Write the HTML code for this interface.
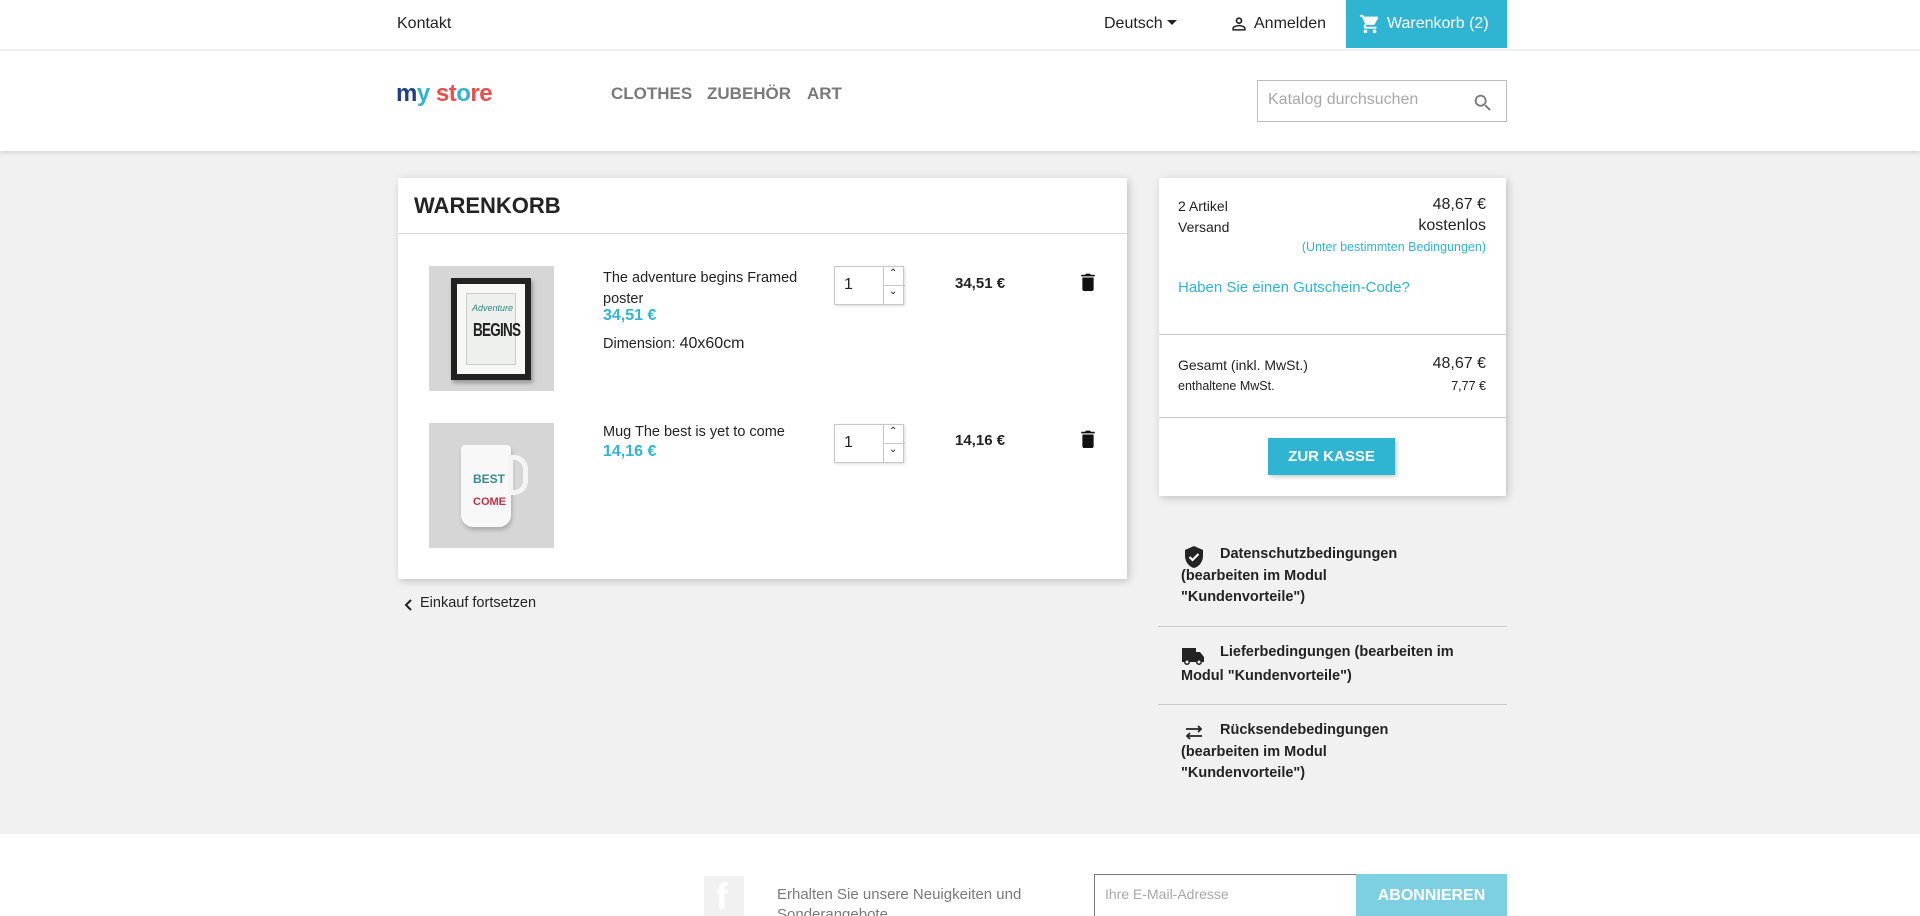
<!DOCTYPE html>
<html><head><meta charset="utf-8"><style>
*{box-sizing:border-box;margin:0;padding:0}
html,body{width:1920px;height:916px;overflow:hidden}
body{background:#f1f1f1;font-family:"Liberation Sans",sans-serif;color:#232323;position:relative}
.a{position:absolute;white-space:nowrap}
.top{position:absolute;left:0;top:0;width:1920px;height:151px;background:#fff;box-shadow:0 2px 4px rgba(0,0,0,.12)}
.topline{position:absolute;left:0;top:49px;width:1920px;height:2px;background:#f1f1f1}
.card{position:absolute;background:#fff;box-shadow:2px 2px 8px rgba(0,0,0,.2)}
.blue{color:#2fb5d2}
.qty{position:absolute;width:70px;height:39px;border:1px solid #c8c8c8;background:#fff;box-shadow:1px 1px 3px rgba(0,0,0,.15)}
.qty .n{position:absolute;left:9px;top:9px;font-size:16px}
.qty .s{position:absolute;left:48px;top:0;width:21px;height:37px;border-left:1px solid #c8c8c8}
.qty .s:after{content:"";position:absolute;left:0;top:18px;width:21px;height:1px;background:#c8c8c8}
.b{font-weight:bold}
.hr{position:absolute;height:1px;background:#c8c8c8}
</style></head><body>
<div class="top"></div>
<div class="topline"></div>
<div class="a" style="left:397px;top:15px;font-size:16px">Kontakt</div>
<div class="a" style="left:1104px;top:15px;font-size:16px">Deutsch <span style="display:inline-block;border:5px solid transparent;border-top-color:#232323;vertical-align:-2px"></span></div>
<svg class="a" style="left:1229px;top:14px" width="20" height="20" viewBox="0 0 24 24"><path fill="#232323" d="M12 4a4 4 0 1 1 0 8 4 4 0 0 1 0-8zm0 2a2 2 0 1 0 0 4 2 2 0 0 0 0-4zm0 7c2.7 0 8 1.3 8 4v3H4v-3c0-2.7 5.3-4 8-4zm0 1.9c-3 0-6.1 1.5-6.1 2.1v1.1h12.2V17c0-.6-3.1-2.1-6.1-2.1z"/></svg>
<div class="a" style="left:1254px;top:15px;font-size:16px">Anmelden</div>
<div class="a" style="left:1346px;top:0;width:161px;height:48px;background:#2fb5d2"></div>
<svg class="a" style="left:1359px;top:13px" width="22" height="22" viewBox="0 0 24 24"><path fill="#fff" d="M7 18a2 2 0 1 0 0 4 2 2 0 0 0 0-4zM1 2v2h2l3.6 7.6-1.4 2.4c-.1.3-.2.6-.2 1 0 1.1.9 2 2 2h12v-2H7.4a.25.25 0 0 1-.2-.4l.9-1.6h7.5c.8 0 1.4-.4 1.7-1l3.6-6.5A1 1 0 0 0 20 4H5.2l-.9-2H1zm16 16a2 2 0 1 0 0 4 2 2 0 0 0 0-4z"/></svg>
<div class="a" style="left:1387px;top:15px;font-size:16px;color:#fff">Warenkorb (2)</div>

<div class="a" style="left:396px;top:80px;font-size:24px;font-weight:bold;letter-spacing:-0.5px"><span style="color:#1e3e8c">m</span><span style="color:#2fb5d2">y</span> <span style="color:#ee4d4d">st</span><span style="color:#2fb5d2">o</span><span style="color:#ee4d4d">re</span></div>
<div class="a b" style="left:611px;top:84px;font-size:17px;color:#7a7a7a">CLOTHES</div>
<div class="a b" style="left:707px;top:84px;font-size:17px;color:#7a7a7a">ZUBEHÖR</div>
<div class="a b" style="left:807px;top:84px;font-size:17px;color:#7a7a7a">ART</div>
<div class="a" style="left:1257px;top:80px;width:250px;height:42px;border:1px solid #bdbdbd;background:#fff"></div>
<div class="a" style="left:1268px;top:91px;font-size:16px;color:#a8a8a8">Katalog durchsuchen</div>
<svg class="a" style="left:1472px;top:92px" width="22" height="22" viewBox="0 0 24 24"><path fill="#7a7a7a" d="M15.5 14h-.8l-.3-.3A6.5 6.5 0 1 0 9.5 16c1.6 0 3.1-.6 4.2-1.6l.3.3v.8l5 5 1.5-1.5-5-5zm-6 0a4.5 4.5 0 1 1 0-9 4.5 4.5 0 0 1 0 9z"/></svg>

<div class="card" style="left:398px;top:178px;width:729px;height:401px"></div>
<div class="a b" style="left:414px;top:193px;font-size:22px">WARENKORB</div>
<div class="hr" style="left:398px;top:233px;width:729px;background:#d6d6d6"></div>

<div class="a" style="left:429px;top:266px;width:125px;height:125px;background:#d6d6d6"></div>
<div class="a" style="left:451px;top:278px;width:80px;height:102px;background:#222;box-shadow:2px 3px 4px rgba(0,0,0,.3)"></div>
<div class="a" style="left:457px;top:284px;width:68px;height:90px;background:#f7f7f5"></div>
<div class="a" style="left:466px;top:293px;width:50px;height:72px;background:#eef0ee;border:1px solid #ccc"></div>
<div class="a" style="left:472px;top:303px;font-size:9px;color:#2a8a7a;font-style:italic">Adventure</div>
<div class="a b" style="left:473px;top:320px;font-size:18px;color:#222;letter-spacing:-1px;transform:scaleX(.75);transform-origin:left">BEGINS</div>

<div class="a" style="left:603px;top:268px;font-size:14.5px;line-height:21px">The adventure begins Framed<br>poster</div>
<div class="a b blue" style="left:603px;top:307px;font-size:16px">34,51 €</div>
<div class="a" style="left:603px;top:335px;font-size:14.5px">Dimension: <span style="font-size:16px">40x60cm</span></div>
<div class="qty" style="left:834px;top:266px"><div class="n">1</div><div class="s"></div><div class="a" style="left:54px;top:1px;font-size:10px">&#8963;</div><div class="a" style="left:54px;top:19px;font-size:10px">&#8964;</div></div>
<div class="a b" style="left:955px;top:275px;font-size:15px">34,51 €</div>
<svg class="a" style="left:1080px;top:273px" width="16" height="18" viewBox="0 0 14 16"><path fill="#111" d="M1 3h12V1.5H9.5L8.7.5H5.3l-.8 1H1zM2 4h10v10.5c0 .8-.7 1.5-1.5 1.5h-7C2.7 16 2 15.3 2 14.5z"/></svg>

<div class="a" style="left:429px;top:423px;width:125px;height:125px;background:#d6d6d6"></div>
<div class="a" style="left:461px;top:445px;width:50px;height:82px;background:#f8f8f8;border-radius:4px 4px 12px 12px;box-shadow:1px 3px 4px rgba(0,0,0,.2)"></div>
<div class="a" style="left:508px;top:455px;width:20px;height:40px;border:5px solid #f4f4f4;border-radius:0 14px 14px 0"></div>
<div class="a b" style="left:473px;top:472px;font-size:12px;color:#3a8a8e">BEST</div>
<div class="a b" style="left:473px;top:496px;font-size:11px;color:#c0304a">COME</div>

<div class="a" style="left:603px;top:424px;font-size:14.5px">Mug The best is yet to come</div>
<div class="a b blue" style="left:603px;top:443px;font-size:16px">14,16 €</div>
<div class="qty" style="left:834px;top:424px"><div class="n">1</div><div class="s"></div><div class="a" style="left:54px;top:1px;font-size:10px">&#8963;</div><div class="a" style="left:54px;top:19px;font-size:10px">&#8964;</div></div>
<div class="a b" style="left:955px;top:432px;font-size:15px">14,16 €</div>
<svg class="a" style="left:1080px;top:430px" width="16" height="18" viewBox="0 0 14 16"><path fill="#111" d="M1 3h12V1.5H9.5L8.7.5H5.3l-.8 1H1zM2 4h10v10.5c0 .8-.7 1.5-1.5 1.5h-7C2.7 16 2 15.3 2 14.5z"/></svg>

<svg class="a" style="left:403px;top:598px" width="12" height="14" viewBox="0 0 12 14"><path d="M8 2 3 7l5 5" stroke="#232323" stroke-width="2" fill="none"/></svg>
<div class="a" style="left:420px;top:595px;font-size:14.5px">Einkauf fortsetzen</div>

<div class="card" style="left:1159px;top:178px;width:347px;height:318px"></div>
<div class="a" style="left:1178px;top:198px;font-size:14px">2 Artikel</div>
<div class="a" style="left:1178px;top:219px;font-size:14px">Versand</div>
<div class="a" style="right:434px;top:196px;font-size:16px">48,67 €</div>
<div class="a" style="right:434px;top:217px;font-size:16px">kostenlos</div>
<div class="a blue" style="right:434px;top:240px;font-size:12.5px">(Unter bestimmten Bedingungen)</div>
<div class="a blue" style="left:1178px;top:279px;font-size:15px">Haben Sie einen Gutschein-Code?</div>
<div class="hr" style="left:1159px;top:334px;width:347px"></div>
<div class="a" style="left:1178px;top:357px;font-size:14px">Gesamt (inkl. MwSt.)</div>
<div class="a" style="right:434px;top:355px;font-size:16px">48,67 €</div>
<div class="a" style="left:1178px;top:379px;font-size:12.5px">enthaltene MwSt.</div>
<div class="a" style="right:434px;top:379px;font-size:12.5px">7,77 €</div>
<div class="hr" style="left:1159px;top:417px;width:347px"></div>
<div class="a b" style="left:1268px;top:438px;width:127px;height:37px;background:#2fb5d2;color:#fff;font-size:15px;text-align:center;line-height:37px;box-shadow:2px 2px 4px rgba(0,0,0,.2)">ZUR KASSE</div>

<svg class="a" style="left:1183px;top:545px" width="22" height="24" viewBox="0 0 22 24"><path fill="#232323" d="M11 1 2 5v6c0 5.5 3.8 10.7 9 12 5.2-1.3 9-6.5 9-12V5z"/><path d="m6.5 12 3 3 6-6" stroke="#fff" stroke-width="2.2" fill="none"/></svg>
<div class="a b" style="left:1220px;top:546px;font-size:14.5px">Datenschutzbedingungen</div>
<div class="a b" style="left:1181px;top:566px;font-size:14.5px;line-height:21px">(bearbeiten im Modul<br>"Kundenvorteile")</div>
<div class="hr" style="left:1158px;top:626px;width:349px"></div>
<svg class="a" style="left:1181px;top:647px" width="24" height="18" viewBox="0 0 24 18"><path fill="#232323" d="M1 1h14v4h4l4 5v5h-2a3 3 0 0 1-6 0H9a3 3 0 0 1-6 0H1z"/><circle cx="6" cy="15" r="1.5" fill="#f1f1f1"/><circle cx="18" cy="15" r="1.5" fill="#f1f1f1"/></svg>
<div class="a b" style="left:1220px;top:644px;font-size:14.5px">Lieferbedingungen (bearbeiten im</div>
<div class="a b" style="left:1181px;top:668px;font-size:14.5px">Modul "Kundenvorteile")</div>
<div class="hr" style="left:1158px;top:704px;width:349px"></div>
<svg class="a" style="left:1183px;top:725px" width="22" height="16" viewBox="0 0 22 16"><path d="M4 11h15M7 8l-3 3 3 3M18 4H3M15 1l3 3-3 3" stroke="#232323" stroke-width="1.8" fill="none"/></svg>
<div class="a b" style="left:1220px;top:722px;font-size:14.5px">Rücksendebedingungen</div>
<div class="a b" style="left:1181px;top:742px;font-size:14.5px;line-height:21px">(bearbeiten im Modul<br>"Kundenvorteile")</div>

<div class="a" style="left:0;top:834px;width:1920px;height:100px;background:#fff"></div>
<div class="a" style="left:704px;top:876px;width:40px;height:50px;background:#f1f1f1"></div>
<div class="a b" style="left:716px;top:876px;font-size:36px;color:#fff">f</div>
<div class="a" style="left:777px;top:885px;font-size:15px;color:#7a7a7a;line-height:20px">Erhalten Sie unsere Neuigkeiten und<br>Sonderangebote</div>
<div class="a" style="left:1094px;top:874px;width:263px;height:50px;border:1px solid #7a7a7a;background:#fff"></div>
<div class="a" style="left:1105px;top:886px;font-size:14px;color:#a8a8a8">Ihre E-Mail-Adresse</div>
<div class="a b" style="left:1356px;top:874px;width:151px;height:50px;background:#7dd0e2;color:#fff;font-size:16px;text-align:center;padding-top:13px">ABONNIEREN</div>
</body></html>
